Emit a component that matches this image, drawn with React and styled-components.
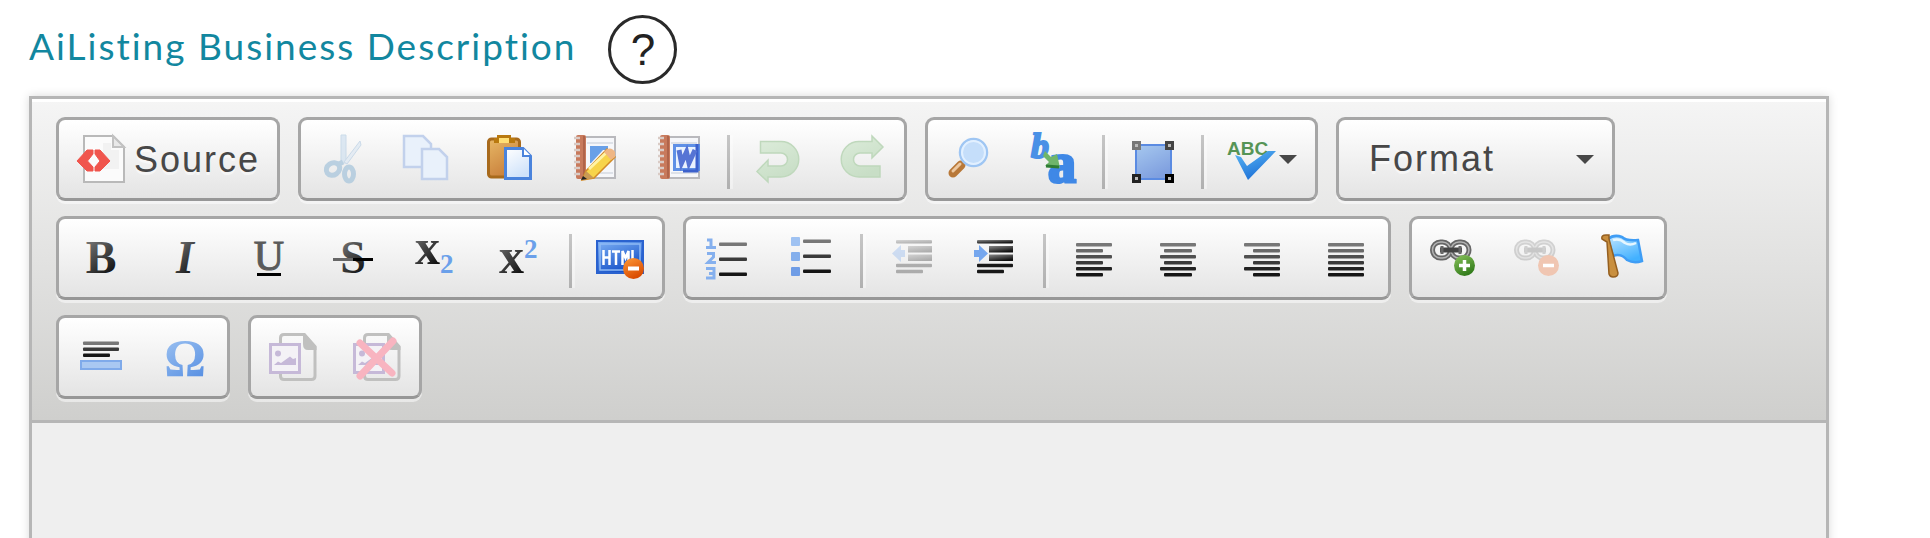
import React from "react";
import styled, { createGlobalStyle } from "styled-components";

const GlobalStyle = createGlobalStyle`
  *, *::before, *::after { box-sizing: border-box; }
  html, body { margin: 0; background: #fff; }
`;

const Page = styled.main`
  display: flex;
  flex-direction: column;
  min-height: 100vh;
  padding: 15px 101px 0 29px;
  font-family: "Liberation Sans", Arial, sans-serif;
`;

const FieldHeader = styled.header`
  display: flex;
  align-items: center;
  gap: 32px;
  height: 69px;
  margin-bottom: 12px;
`;

const FieldTitle = styled.h1`
  margin: 0;
  padding-bottom: 8px;
  color: #12879f;
  font: 400 37px/48px Lato, "Open Sans", sans-serif;
  letter-spacing: 2px;
  white-space: nowrap;
`;

const HelpButton = styled.button`
  width: 69px;
  height: 69px;
  padding: 0;
  border: 3px solid #2a2a2a;
  border-radius: 50%;
  background: #fff;
  color: #222;
  font: 400 44px/60px "Liberation Sans", Arial, sans-serif;
`;

const Editor = styled.section`
  display: flex;
  flex-direction: column;
  flex: 1;
  border: 3px solid #b6b6b6;
  border-bottom: 0;
  box-shadow: 0 0 9px rgba(0, 0, 0, 0.15);
`;

const Toolbar = styled.div`
  display: flex;
  flex-wrap: wrap;
  gap: 15px 18px;
  padding: 18px 24px 21px;
  border-bottom: 3px solid #b6b6b6;
  background: linear-gradient(#f5f5f5, #cfcfcd);
  box-shadow: inset 0 3px 0 #fff;
`;

const Group = styled.div`
  display: flex;
  height: 84px;
  border: 3px solid #a6a6a6;
  border-bottom-color: #979797;
  border-radius: 9px;
  background: linear-gradient(#fff, #e4e4e4);
  box-shadow: 0 3px 0 rgba(255, 255, 255, 0.5);
`;

const ToolButton = styled.button`
  display: flex;
  align-items: center;
  gap: ${(p) => (p.$labelled ? "9px" : "3px")};
  height: 78px;
  padding: 0 ${(p) => (p.$labelled ? "17px" : "18px")} 0 18px;
  border: 0;
  background: transparent;
`;

const ToolLabel = styled.span`
  padding-top: 2px;
  color: #474747;
  font: 36px/42px "Liberation Sans", Arial, sans-serif;
  letter-spacing: 2px;
  text-shadow: 0 3px 0 rgba(255, 255, 255, 0.5);
`;

const Separator = styled.span`
  width: 3px;
  height: 54px;
  margin: 15px 6px 0;
  background: linear-gradient(#c6c6c6, #b0b0b0);
  box-shadow: 3px 0 1px rgba(255, 255, 255, 0.4);
`;

const Icon = styled.svg`
  display: block;
  flex: none;
  width: 48px;
  height: 48px;
  overflow: visible;
`;

const Caret = styled.svg`
  display: block;
  flex: none;
  width: 18px;
  height: 9px;
  pointer-events: none;
`;

const SelectGroup = styled(Group)`
  display: grid;
  align-items: center;
  width: 279px;

  > * { grid-area: 1 / 1; }
  ${Caret} { justify-self: end; margin-right: 18px; }
`;

const FormatSelect = styled.select`
  appearance: none;
  width: 100%;
  height: 78px;
  padding: 0 48px 0 30px;
  border: 0;
  background: transparent;
  color: #474747;
  font: 36px/42px "Liberation Sans", Arial, sans-serif;
  letter-spacing: 2px;
  text-shadow: 0 3px 0 rgba(255, 255, 255, 0.5);
`;

const ContentArea = styled.textarea`
  flex: 1;
  min-height: 96px;
  padding: 24px;
  border: 0;
  outline: 0;
  resize: none;
  background: #efefef;
  font: 36px/48px "Liberation Sans", Arial, sans-serif;
`;

const Serif = styled.text`
  font-family: "Liberation Serif", "Times New Roman", serif;
  font-weight: ${(p) => p.$weight || 700};
  font-style: ${(p) => (p.$italic ? "italic" : "normal")};
  font-size: ${(p) => p.$size}px;
`;

const Sans = styled.text`
  font-family: "Liberation Sans", Arial, sans-serif;
  font-weight: 700;
  font-size: ${(p) => p.$size}px;
`;

const Defs = styled.svg`
  position: absolute;
  width: 0;
  height: 0;
`;

const GRADIENTS = [
  ["ink", "#888", "#111"],
  ["blue", "#a5c8f3", "#5b92e3"],
  ["htmlBlue", "#7fb2f5", "#1450c8"],
  ["orange", "#ff9b38", "#d94a00"],
  ["wood", "#e7b765", "#c9803c"],
  ["paper", "#fff", "#cfe2fa"],
  ["area", "#a6c8ef", "#7f9fdf"],
  ["flag", "#bfe5ff", "#42b1ff"],
  ["green", "#8bc35c", "#337c1c"],
  ["check", "#5cb8f5", "#1c6fd6"],
  ["pale", "#dcecda", "#c8dec6"],
];

function Gradients() {
  return (
    <Defs aria-hidden="true">
      <defs>
        {GRADIENTS.map(([id, a, b]) => (
          <linearGradient key={id} id={id} x1="0" y1="0" x2="0.5" y2="1">
            <stop offset="0" stopColor={a} />
            <stop offset="1" stopColor={b} />
          </linearGradient>
        ))}
      </defs>
    </Defs>
  );
}

const LINE_SHADES = ["#777", "#6a6a6a", "#505050", "#3a3a3a", "#222", "#161616"];

function Lines({ rows }) {
  return rows.map(([x1, x2, y], i) => (
    <rect key={y} x={x1} y={y - 1.5} width={x2 - x1} height="3.6" rx="1"
      fill={LINE_SHADES[Math.round((i * 5) / Math.max(1, rows.length - 1))]} />
  ));
}

const alignRows = (a, b) => [10.5, 16.5, 22.5, 28.5, 34.5, 40.5].map((y, i) => (i % 2 ? [a, b, y] : [6, 42, y]));

function Chain() {
  return (
    <g fill="none">
      <rect x="2.5" y="8" width="18" height="16" rx="8" stroke="#666" strokeWidth="5" />
      <rect x="21" y="8" width="18" height="16" rx="8" stroke="#666" strokeWidth="5" />
      <rect x="2.5" y="8" width="18" height="16" rx="8" stroke="#b4b4b4" strokeWidth="1.500" />
      <rect x="21" y="8" width="18" height="16" rx="8" stroke="#b4b4b4" strokeWidth="1.500" />
      <path d="M10 16H32" stroke="#444" strokeWidth="5" />
      <path d="M12 12V20M30 12V20" stroke="#666" strokeWidth="3" />
    </g>
  );
}

function Indentation({ x }) {
  return (
    <g fill="url(#ink)">
      <rect x={x} y="6" width="36" height="3.500" rx="1" />
      <rect x={x + 12} y="12" width="24" height="6.500" />
      <rect x={x + 12} y="20.500" width="24" height="6.500" />
      <rect x={x} y="29.800" width="36" height="3.500" rx="1" fill="#181818" />
      <rect x={x} y="35.800" width="27" height="3.500" rx="1" fill="#181818" />
    </g>
  );
}

function PictureFile() {
  return (
    <>
      <path d="M11.500 10V5Q11.500 1.500 15 1.500H35L46 14V43Q46 46.500 42.500 46.500H15Q11.500 46.500 11.500 43V41" fill="none" stroke="#c0c0bf" strokeWidth="3" />
      <path d="M34 0H36L47.500 13V17H39Q34 17 34 11Z" fill="#c0c0bf" />
      <rect x="1.500" y="11.500" width="29" height="28" fill="#f4f2f6" stroke="#c6b9d8" strokeWidth="3" />
      <circle cx="9" cy="20.500" r="3" fill="#c6b9d8" />
      <path d="M5 32L9 28.500L12 30L21 23.500L24 26L27 25V32Z" fill="#c6b9d8" />
    </>
  );
}

function Notebook() {
  return (
    <>
      <path d="M14 2H44V43H14Z" fill="#f6f7fa" stroke="#b9b9bd" strokeWidth="2" />
      <path d="M16 8H42M16 38H42" stroke="#dde1e8" strokeWidth="2" />
      <rect x="5" y="0" width="10" height="44" rx="2" fill="#c87a5c" />
      <path d="M13 1V43" stroke="#b0644a" strokeWidth="2" />
      <path d="M3 3H9M3 9H9M3 15H9M3 21H9M3 27H9M3 33H9M3 39H9" stroke="#d9cbc5" strokeWidth="2.500" />
    </>
  );
}

const ICONS = {
  source: (
    <>
      <path d="M7 1H36L47 12V47H7Z" fill="#fbfbfb" stroke="#b9b9b9" strokeWidth="2" />
      <path d="M26 8H34V15H42V34H26Z" fill="#eee" opacity=".7" />
      <path d="M36 1V12H47Z" fill="#e9e9e9" stroke="#c2c2c2" strokeWidth="2" />
      <path d="M0 26L10 15H16V19L10.500 26L16 32V36H10ZM33 26L23 15H18V19L23 26L18 32V36H23Z" fill="#f0554d" stroke="#f0554d" strokeWidth="1" />
    </>
  ),
  cut: (
    <g fill="none" opacity=".75">
      <path d="M22 0H27V28H22Z" fill="#d3e2f0" stroke="#bdd2e5" strokeWidth="1" />
      <path d="M41 6L42 10L28 29L25 27Z" fill="#dfe9f3" stroke="#bdd2e5" strokeWidth="1" />
      <path d="M24 27L20 29" stroke="#a9c6dc" strokeWidth="5" />
      <ellipse cx="14" cy="34" rx="7" ry="6" stroke="#a9c6dc" strokeWidth="5" transform="rotate(-35 14 34)" />
      <ellipse cx="30" cy="39" rx="4.500" ry="7" stroke="#a9c6dc" strokeWidth="5" />
    </g>
  ),
  copy: (
    <g fill="#e9f1fb" stroke="#c2d1ec" strokeWidth="2.500">
      <path d="M1 1H20L28 9V32H1Z" />
      <path d="M19 14H36L44 22V44H19Z" />
    </g>
  ),
  paste: (
    <>
      <rect x="1.500" y="4" width="31" height="38" rx="3" fill="url(#wood)" stroke="#a86a1c" strokeWidth="3" />
      <path d="M10 0H24V3H28V8H7V3H10Z" fill="#b9790f" />
      <path d="M12 3H22V8H12Z" fill="#ffdf75" />
      <path d="M18.500 13.500H36L43.500 21V43.500H18.500Z" fill="url(#paper)" stroke="#4a83dc" strokeWidth="3" />
      <path d="M36 13V21H44" fill="#fff" stroke="#4a83dc" strokeWidth="2" />
    </>
  ),
  pasteText: (
    <>
      <Notebook />
      <path d="M19 11H37V15H32L20 28H19Z" fill="#69a0e8" />
      <path d="M36 14L44 22L23 43L11 45L15 36Z" fill="#f7d44b" stroke="#d38b28" strokeWidth="1.500" />
      <path d="M18 34L37 16" stroke="#fff3a6" strokeWidth="3" />
      <path d="M36 14Q41 12 44 17V22L40 25L33 17Z" fill="#efb684" />
      <path d="M15 36L23 43L11 45Z" fill="#c99a55" />
      <path d="M12 41L16 44L10 45Z" fill="#222" />
    </>
  ),
  pasteWord: (
    <>
      <Notebook />
      <rect x="19.500" y="10.500" width="24" height="24" fill="#eaf2fe" stroke="#5f90e6" strokeWidth="3" />
      <path d="M42 9V36H28" fill="none" stroke="#3c60cc" strokeWidth="3" />
      <path d="M24 15L26.500 28L31.500 17L34 28L40 15" fill="none" stroke="#5674d4" strokeWidth="5" />
    </>
  ),
  undo: <path d="M6.500 6.500H27A17.500 17.500 0 0 1 27 42H14V47L3 36.500L14 25V31H27A6.500 6.500 0 0 0 27 18H6.500Z" fill="url(#pale)" stroke="#bfd8bc" strokeWidth="1.500" />,
  redo: <path d="M42 42H21A17.500 17.500 0 0 1 21 6.500H34V1L45 12L34 23V18H22A6.500 6.500 0 0 0 22 31H42Z" fill="url(#pale)" stroke="#bfd8bc" strokeWidth="1.500" />,
  find: (
    <>
      <path d="M15 30L7 38" stroke="#b87838" strokeWidth="9" strokeLinecap="round" />
      <path d="M14 29L7 36" stroke="#edc8a0" strokeWidth="3" strokeLinecap="round" />
      <circle cx="27.500" cy="17.500" r="13.500" fill="#c5defa" stroke="#9fc6f3" strokeWidth="2.500" />
      <circle cx="27.500" cy="17.500" r="11.500" fill="none" stroke="#e2f0ff" strokeWidth="2" />
    </>
  ),
  replace: (
    <>
      <Serif x="1" y="23" $size="36" $italic fill="#4a90e6" stroke="#4a90e6" strokeWidth="2">b</Serif>
      <Serif x="18" y="47" $size="56" fill="#3f88e6" stroke="#3f88e6" strokeWidth="3">a</Serif>
      <path d="M15 16L21 22L27 19L30 33L15 31L19 27L13 21Z" fill="#6fb56a" />
      <path d="M16 31L29 32" stroke="#2f7d33" strokeWidth="3" />
    </>
  ),
  selectAll: (
    <>
      <rect x="7" y="10" width="35" height="34" fill="url(#area)" stroke="#5b8be2" strokeWidth="2" />
      {[[3, 6, "#777"], [36, 6, "#444"], [3, 39, "#222"], [36, 39, "#000"]].map(([x, y, c]) => (
        <rect key={`${x}-${y}`} x={x + 1.5} y={y + 1.5} width="6" height="6" fill="#bbb" stroke={c} strokeWidth="3" />
      ))}
    </>
  ),
  spell: (
    <>
      <Sans x="-1" y="20" $size="19" fill="#569456">ABC</Sans>
      <path d="M7 20L13 22L19 31L40 16H48L20 45Z" fill="url(#check)" />
    </>
  ),
  bold: <Serif x="24" y="39" $size="46" textAnchor="middle" fill="url(#ink)">B</Serif>,
  italic: <Serif x="24" y="39" $size="46" $italic textAnchor="middle" fill="url(#ink)">I</Serif>,
  underline: (
    <>
      <Serif x="24" y="36" $size="42" $weight="400" textAnchor="middle" fill="#5a5a5a" stroke="#5a5a5a" strokeWidth="1">U</Serif>
      <rect x="12" y="39" width="24" height="3" fill="#000" />
    </>
  ),
  strike: (
    <>
      <Serif x="24" y="39" $size="46" textAnchor="middle" fill="url(#ink)">S</Serif>
      <rect x="4" y="24" width="20" height="3" fill="#666" />
      <rect x="24" y="24" width="20" height="3" fill="#000" />
    </>
  ),
  sub: (
    <>
      <Serif x="2" y="30" $size="50" fill="url(#ink)">x</Serif>
      <Serif x="27" y="39" $size="27" fill="#6ba0ea">2</Serif>
    </>
  ),
  sup: (
    <>
      <Serif x="2" y="39" $size="50" fill="url(#ink)">x</Serif>
      <Serif x="27" y="24" $size="27" fill="#6ba0ea">2</Serif>
    </>
  ),
  removeFormat: (
    <>
      <rect x="1" y="7" width="46" height="32" fill="url(#htmlBlue)" stroke="#2a62cf" strokeWidth="2" />
      <rect x="4" y="10" width="40" height="26" fill="none" stroke="#8fbaf5" strokeWidth="1.500" />
      <path d="M7.500 16V31M13.500 16V31M7.500 23.500H13.500M16 17.500H24M20 17.500V31M26.500 31V17L29.500 24L32.500 17V31M36.500 16V30H41" fill="none" stroke="#fff" strokeWidth="2.500" />
      <circle cx="37.500" cy="34.500" r="10.500" fill="url(#orange)" />
      <rect x="32" y="32.500" width="11" height="4" fill="#fff" />
    </>
  ),
  numbered: (
    <>
      <g fill="none" stroke="#85b0ee" strokeWidth="3">
        <path d="M3 6H7V13M2 13.500H12" />
        <path d="M3 19.500H9.500V23L4 28.500H12" />
        <path d="M2 34.500H10V44H2M5 39.500H10" />
      </g>
      <Lines rows={[[15, 43, 10], [15, 43, 25], [15, 43, 40]]} />
    </>
  ),
  bulleted: (
    <>
      <rect x="3" y="3" width="9" height="9" rx="1" fill="#9fc2f2" />
      <rect x="3" y="18" width="9" height="9" rx="1" fill="#84afec" />
      <rect x="3" y="33" width="9" height="9" rx="1" fill="#6f9de6" />
      <Lines rows={[[15, 43, 7], [15, 43, 22], [15, 43, 37]]} />
    </>
  ),
  outdent: (
    <g opacity=".3">
      <Indentation x={9} />
      <path d="M5 19.500L14 11V16H18V23H14V28Z" fill="#76a7ee" />
    </g>
  ),
  indent: (
    <>
      <Indentation x={6} />
      <path d="M17 19.500L8 11V16H3V23H8V28Z" fill="#76a7ee" />
    </>
  ),
  alignLeft: <Lines rows={alignRows(6, 33)} />,
  alignCenter: <Lines rows={alignRows(10, 38)} />,
  alignRight: <Lines rows={alignRows(15, 42)} />,
  justify: <Lines rows={alignRows(6, 42)} />,
  link: (
    <>
      <Chain />
      <circle cx="34.500" cy="31.500" r="10.500" fill="url(#green)" />
      <path d="M29 31.500H40M34.500 26V37" stroke="#fff" strokeWidth="3.500" />
    </>
  ),
  unlink: (
    <>
      <g opacity=".25"><Chain /></g>
      <circle cx="34.500" cy="31.500" r="10.500" fill="#f0c6b2" />
      <path d="M29 31.500H40" stroke="#fff" strokeWidth="3.500" />
    </>
  ),
  anchor: (
    <>
      <path d="M10 5Q16 0 24 3Q28 7 40 6L44 27Q36 30 29 26Q23 19 15 22Z" fill="url(#flag)" stroke="#3f9df5" strokeWidth="2.500" />
      <path d="M15 6Q22 4 27 9Q32 12 38 9" fill="none" stroke="#e6f6ff" strokeWidth="2.500" />
      <path d="M4 5Q3 1 8 1H11V5L20 39Q20 43 15 43Q12 43 11 40L9 8Z" fill="#c98f3e" stroke="#955f20" strokeWidth="1.500" />
    </>
  ),
  rule: (
    <>
      <Lines rows={[[6, 42, 10], [6, 42, 16], [6, 33, 22]]} />
      <rect x="4" y="28" width="40" height="8" fill="#a9c8f2" stroke="#7faaea" strokeWidth="2" />
    </>
  ),
  omega: <Serif x="24" y="43" $size="52" textAnchor="middle" fill="url(#blue)">Ω</Serif>,
  picture: <PictureFile />,
  removePicture: (
    <>
      <PictureFile />
      <path d="M7 10L39 40M40 8L7 43" stroke="#f8b4c0" strokeWidth="7" strokeLinecap="round" />
    </>
  ),
};

const DropArrow = () => (
  <Caret viewBox="0 0 18 9" aria-hidden="true">
    <path d="M0 0H18L9 9Z" fill="#474747" />
  </Caret>
);

function Tool({ icon, name, label, menu }) {
  return (
    <ToolButton type="button" title={name} aria-label={name} $labelled={Boolean(label)}>
      <Icon viewBox="0 0 48 48" aria-hidden="true">{ICONS[icon]}</Icon>
      {label && <ToolLabel>{label}</ToolLabel>}
      {menu && <DropArrow />}
    </ToolButton>
  );
}

function ToolGroup({ name, items }) {
  return (
    <Group role="group" aria-label={name}>
      {items.map((item, i) =>
        item === "|" ? <Separator key={i} role="separator" /> : <Tool key={i} icon={item[0]} name={item[1]} {...item[2]} />
      )}
    </Group>
  );
}

const DOCUMENT = [["source", "Source", { label: "Source" }]];
const CLIPBOARD = [["cut", "Cut"], ["copy", "Copy"], ["paste", "Paste"], ["pasteText", "Paste as plain text"], ["pasteWord", "Paste from Word"], "|", ["undo", "Undo"], ["redo", "Redo"]];
const EDITING = [["find", "Find"], ["replace", "Replace"], "|", ["selectAll", "Select All"], "|", ["spell", "Spell Check", { menu: true }]];
const STYLES = [["bold", "Bold"], ["italic", "Italic"], ["underline", "Underline"], ["strike", "Strikethrough"], ["sub", "Subscript"], ["sup", "Superscript"], "|", ["removeFormat", "Remove Format"]];
const PARAGRAPH = [["numbered", "Numbered List"], ["bulleted", "Bulleted List"], "|", ["outdent", "Decrease Indent"], ["indent", "Increase Indent"], "|", ["alignLeft", "Align Left"], ["alignCenter", "Center"], ["alignRight", "Align Right"], ["justify", "Justify"]];
const LINKS = [["link", "Link"], ["unlink", "Unlink"], ["anchor", "Anchor"]];
const INSERT = [["rule", "Horizontal Line"], ["omega", "Special Character"]];
const PICTURES = [["picture", "Picture"], ["removePicture", "Remove Picture"]];

export default function App() {
  return (
    <Page>
      <GlobalStyle />
      <Gradients />
      <FieldHeader>
        <FieldTitle id="description-title">AiListing Business Description</FieldTitle>
        <HelpButton type="button" aria-label="Help">?</HelpButton>
      </FieldHeader>
      <Editor aria-labelledby="description-title">
        <Toolbar role="toolbar" aria-label="Editor toolbar">
          <ToolGroup name="Document" items={DOCUMENT} />
          <ToolGroup name="Clipboard" items={CLIPBOARD} />
          <ToolGroup name="Editing" items={EDITING} />
          <SelectGroup>
            <FormatSelect aria-label="Paragraph format" defaultValue="format">
              <option value="format">Format</option>
            </FormatSelect>
            <DropArrow />
          </SelectGroup>
          <ToolGroup name="Basic styles" items={STYLES} />
          <ToolGroup name="Paragraph" items={PARAGRAPH} />
          <ToolGroup name="Links" items={LINKS} />
          <ToolGroup name="Insert" items={INSERT} />
          <ToolGroup name="Pictures" items={PICTURES} />
        </Toolbar>
        <ContentArea aria-labelledby="description-title" />
      </Editor>
    </Page>
  );
}
